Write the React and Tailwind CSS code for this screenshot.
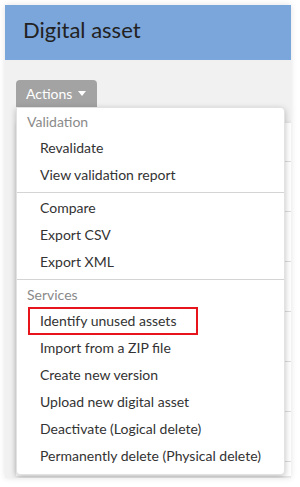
import React from 'react';

const groups = [
  {
    header: "Validation",
    items: ["Revalidate", "View validation report"],
  },
  {
    items: ["Compare", "Export CSV", "Export XML"],
  },
  {
    header: "Services",
    items: [
      "Identify unused assets",
      "Import from a ZIP file",
      "Create new version",
      "Upload new digital asset",
      "Deactivate (Logical delete)",
      "Permanently delete (Physical delete)",
    ],
  },
];

function ActionsMenu() {
  return (
    <div className="absolute left-0 top-0 w-[269px] bg-white rounded-b-[4px] rounded-tr-[4px] border border-[#e2e2e2] shadow-[0_2px_6px_rgba(0,0,0,0.25)] pb-[5px]">
      {groups.map((group, gi) => (
        <div key={gi}>
          {gi > 0 && <div className="h-px bg-[#d4d4d4] mt-[4px] mb-[1px]" />}
          {group.header && (
            <div className="h-[26px] flex items-center pl-[10px] text-[#8a8a8a]">{group.header}</div>
          )}
          {group.items.map((item) => (
            <div key={item} className="relative h-[27px] flex items-center pl-[23px] text-[#333]">
              {item === "Identify unused assets" && (
                <span className="absolute left-[11px] top-0 w-[170px] h-[28px] border-2 border-[#e8141b]" />
              )}
              {item}
            </div>
          ))}
        </div>
      ))}
    </div>
  );
}

export default function App() {
  return (
    <div className="min-h-[487px] bg-white p-[5px]" style={{ fontFamily: "Lato, 'Open Sans', sans-serif" }}>
      <div className="w-[286px] h-[473px] bg-[#f1f1f1] overflow-hidden shadow-[0_0_6px_rgba(0,0,0,0.12)]">
        {/* Header */}
        <div className="h-[55px] bg-[#7ba6dc] pl-[18px] pt-[11px]">
          <h1 className="text-[22px] leading-[28px] text-[#222]">Digital asset</h1>
        </div>

        <div className="pl-[11px] pt-[20px] text-[14px]">
          <button type="button" className="h-[27px] w-[81px] bg-[#a3a3a3] text-white rounded-t-[4px] flex items-center pl-[10px] gap-[6px]">
            <span>Actions</span>
            <svg width="8" height="5" viewBox="0 0 8 5"><path d="M0 0h8L4 5z" fill="#fff" /></svg>
          </button>

          <div className="relative pt-[16px]">
            {/* Table behind the menu */}
            <div className="w-[290px] h-[353px] bg-white shadow-[0_0_4px_rgba(0,0,0,0.1)] pt-[38px]">
              {[0, 1, 2, 3, 4, 5, 6].map((r) => (
                <div key={r} className="h-[50px] border-t border-[#dcdcdc]" />
              ))}
            </div>
            <ActionsMenu />
          </div>
        </div>
      </div>
    </div>
  );
}
